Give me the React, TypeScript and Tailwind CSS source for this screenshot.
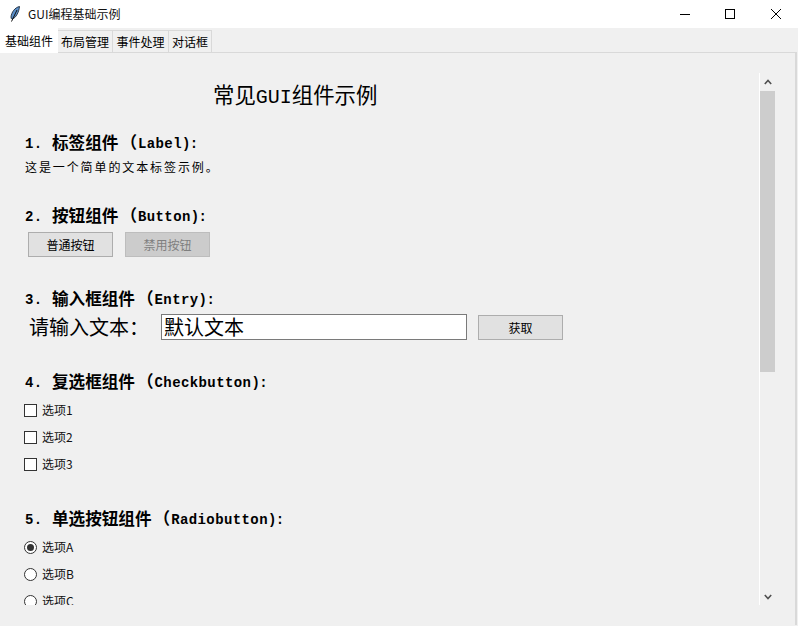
import React from 'react'

const cjk = "font-['Noto_Sans_CJK_SC','Noto_Sans_CJK_JP',sans-serif]"
const mono = "font-['Liberation_Mono',monospace] text-[14px] font-bold tracking-[0.4px] -translate-y-px"

const Heading = ({ num, name, latin, className }: { num: string; name: string; latin: string; className: string }) => (
  <div className={`flex h-[20px] items-baseline whitespace-pre pl-[25px] text-[16.6px] font-bold leading-[18px] text-black ${className}`}>
    <span className={`${mono} w-[27px]`}>{num}.</span>
    <span>{name}</span>
    <span className="ml-[2px]">（</span>
    <span className={`${mono} ml-[1px]`}>{latin}</span>
    <span className={mono}>)</span>
    <span className={`${mono} -ml-[1px]`}>:</span>
  </div>
)

const Btn = ({ label, disabled, className }: { label: string; disabled?: boolean; className?: string }) => (
  <button
    type="button"
    className={`flex h-[25px] w-[85px] items-center justify-center border text-[12px] ${
      disabled ? 'border-[#bdbdbd] bg-[#cccccc] text-[#7f7f7f]' : 'border-[#adadad] bg-[#e1e1e1] text-black'
    } ${className ?? ''}`}
  >
    {label}
  </button>
)

const Check = ({ label }: { label: string }) => (
  <div className="flex h-[27px] items-center pl-[24px] text-[12px] text-[#111]">
    <span className="h-[13px] w-[13px] border border-[#333] bg-white" />
    <span className="ml-[5px] -translate-y-px">{label}</span>
  </div>
)

const Radio = ({ label, on }: { label: string; on?: boolean }) => (
  <div className="flex h-[27px] items-center pl-[24px] text-[12px] text-[#111]">
    <span className="flex h-[13px] w-[13px] items-center justify-center rounded-full border border-[#333] bg-white">
      {on && <span className="h-[7px] w-[7px] rounded-full bg-[#333]" />}
    </span>
    <span className="ml-[5px] -translate-y-px">{label}</span>
  </div>
)

const Tab = ({ label, active, className }: { label: string; active?: boolean; className: string }) =>
  active ? (
    <div className={`z-10 flex h-[25px] items-center justify-center bg-white text-[12px] text-black ${className}`}>{label}</div>
  ) : (
    <div className={`mt-[2px] flex h-[23px] items-center justify-center border-y border-r border-[#d9d9d9] bg-[#f0f0f0] text-[12px] text-black ${className}`}>
      {label}
    </div>
  )

export default function App() {
  return (
    <div className={`flex h-[626px] w-[798px] flex-col overflow-hidden bg-[#f0f0f0] ${cjk}`}>
      {/* title bar */}
      <div className="flex h-[28px] items-center bg-white">
        <svg className="ml-[9px] h-[16px] w-[12px]" viewBox="0 0 12 16">
          <path d="M10.5 0.5C6 1.5 2.5 6 2 11c0 1 .3 1.8 1 2.2C7 12 10 6 10.5 0.5z" fill="#5b8fc9" stroke="#1c2a3a" strokeWidth="0.9" />
          <path d="M8 4L2.5 15.5" stroke="#111" strokeWidth="1" fill="none" />
        </svg>
        <span className="ml-[7px] text-[12px] text-[#111]">GUI编程基础示例</span>
        <div className="ml-auto flex h-full items-center">
          <svg className="mr-[35px] h-[10px] w-[10px]" viewBox="0 0 10 10"><path d="M0 5.5h10" stroke="#000" strokeWidth="1" /></svg>
          <svg className="mr-[36px] h-[10px] w-[10px]" viewBox="0 0 10 10"><rect x="0.5" y="0.5" width="9" height="9" fill="none" stroke="#000" strokeWidth="1" /></svg>
          <svg className="mr-[17px] h-[10px] w-[10px]" viewBox="0 0 10 10"><path d="M0 0l10 10M10 0L0 10" stroke="#000" strokeWidth="1" /></svg>
        </div>
      </div>

      {/* tabs */}
      <div className="flex h-[25px] items-start">
        <Tab label="基础组件" active className="w-[58px]" />
        <Tab label="布局管理" className="w-[55px]" />
        <Tab label="事件处理" className="w-[56px]" />
        <Tab label="对话框" className="w-[43px]" />
      </div>

      {/* panel */}
      <div className="-mt-[1px] mr-[1px] flex h-[573px] border-r-2 border-t border-[#d9d9d9]">
        <div className="h-[552px] w-[759px] overflow-hidden">
          <div className="ml-[213px] mt-[26px] flex h-[30px] items-baseline text-[21.4px] leading-[30px] text-black">
            <span>常见</span>
            <span className="font-['Liberation_Mono',monospace] text-[20px]">GUI</span>
            <span>组件示例</span>
          </div>

          <Heading num="1" name="标签组件" latin="Label" className="mt-[24px]" />
          <div className="mt-[4px] pl-[25px] text-[12px] leading-[20px] tracking-[1.9px] text-black">这是一个简单的文本标签示例。</div>

          <Heading num="2" name="按钮组件" latin="Button" className="mt-[29px]" />
          <div className="mt-[6px] flex gap-[12px] pl-[28px]">
            <Btn label="普通按钮" />
            <Btn label="禁用按钮" disabled />
          </div>

          <Heading num="3" name="输入框组件" latin="Entry" className="mt-[32px]" />
          <div className="mt-[5px] flex items-start">
            <span className="ml-[29px] w-[132px] text-[20px] leading-[26px] text-black">请输入文本：</span>
            <div className="flex h-[26px] w-[306px] items-center border border-[#7a7a7a] bg-white pl-[2px] text-[20px] text-black">默认文本</div>
            <Btn label="获取" className="ml-[11px] mt-[1px]" />
          </div>

          <Heading num="4" name="复选框组件" latin="Checkbutton" className="mt-[32px]" />
          <div className="mt-[5px]">
            <Check label="选项1" />
            <Check label="选项2" />
            <Check label="选项3" />
          </div>

          <Heading num="5" name="单选按钮组件" latin="Radiobutton" className="mt-[31px]" />
          <div className="mt-[5px]">
            <Radio label="选项A" on />
            <Radio label="选项B" />
            <Radio label="选项C" />
          </div>
        </div>

        {/* scrollbar */}
        <div className="mt-[20px] flex h-[532px] w-[17px] flex-col border-l border-white">
          <div className="flex h-[18px] items-center justify-center">
            <svg className="h-[6px] w-[8px]" viewBox="0 0 8 6"><path d="M0.8 5L4 1.5L7.2 5" fill="none" stroke="#505050" strokeWidth="1.6" /></svg>
          </div>
          <div className="h-[281px] w-[15px] bg-[#cdcdcd]" />
          <div className="mt-auto flex h-[16px] items-center justify-center">
            <svg className="h-[6px] w-[8px]" viewBox="0 0 8 6"><path d="M0.8 1L4 4.5L7.2 1" fill="none" stroke="#505050" strokeWidth="1.6" /></svg>
          </div>
        </div>
      </div>
    </div>
  )
}
